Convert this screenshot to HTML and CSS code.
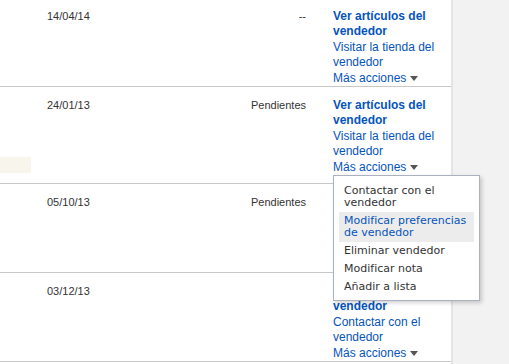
FILE: index.html
```html
<!DOCTYPE html>
<html lang="es">
<head>
<meta charset="utf-8">
<link rel="stylesheet" href="styles.css">
</head>
<body>
<div class="panel">
  <div class="row">
    <div class="note-col"></div>
    <div class="date">14/04/14</div>
    <div class="status">--</div>
    <div class="actions">
      <a class="link strong">Ver artículos del vendedor</a>
      <a class="link">Visitar la tienda del vendedor</a>
      <span class="more"><a class="link">Más acciones</a><span class="caret"></span></span>
    </div>
  </div>
  <div class="row">
    <div class="note-col"><div class="note"></div></div>
    <div class="date">24/01/13</div>
    <div class="status">Pendientes</div>
    <div class="actions">
      <a class="link strong">Ver artículos del vendedor</a>
      <a class="link">Visitar la tienda del vendedor</a>
      <span class="more"><a class="link">Más acciones</a><span class="caret"></span>
        <ul class="menu">
          <li>Contactar con el vendedor</li>
          <li class="active">Modificar preferencias de vendedor</li>
          <li>Eliminar vendedor</li>
          <li>Modificar nota</li>
          <li>Añadir a lista</li>
        </ul>
      </span>
    </div>
  </div>
  <div class="row">
    <div class="note-col"></div>
    <div class="date">05/10/13</div>
    <div class="status">Pendientes</div>
    <div class="actions">
      <a class="link strong">Ver artículos del vendedor</a>
      <a class="link">Visitar la tienda del vendedor</a>
      <span class="more"><a class="link">Más acciones</a><span class="caret"></span></span>
    </div>
  </div>
  <div class="row">
    <div class="note-col"></div>
    <div class="date">03/12/13</div>
    <div class="status"></div>
    <div class="actions">
      <a class="link strong">Ver artículos del vendedor</a>
      <a class="link">Contactar con el vendedor</a>
      <span class="more"><a class="link">Más acciones</a><span class="caret"></span></span>
    </div>
  </div>
</div>
</body>
</html>
```
FILE: styles.css
```css
html, body {
  margin: 0;
  padding: 0;
}
body {
  background: #f2f2f2;
  font-family: "Liberation Sans", Arial, sans-serif;
  overflow: hidden;
  height: 364px;
}
.panel {
  width: 451px;
  background: #fff;
  border-right: 2px solid #e4e4e4;
  margin-top: -2px;
  min-height: 380px;
}
.row {
  display: grid;
  grid-template-columns: 47px 150px 109px 145px;
  padding: 11px 0 0 0;
  border-bottom: 1px solid #c8c8c8;
}
.note-col {
  min-height: 1px;
}
.note {
  width: 31px;
  height: 16px;
  margin-top: 59px;
  margin-bottom: 10px;
  background: #f8f6ec;
}
.date, .status {
  font-size: 11px;
  line-height: 15.4px;
  color: #333;
}
.status {
  text-align: right;
}
.actions {
  padding-left: 27px;
  width: 110px;
  font-size: 12px;
  line-height: 15.4px;
}
.link {
  display: block;
  color: #0654ba;
  text-decoration: none;
}
.strong {
  font-weight: bold;
}
.more {
  display: block;
  position: relative;
}
.more .link {
  display: inline;
}
.caret {
  display: inline-block;
  width: 0;
  height: 0;
  border-left: 4px solid transparent;
  border-right: 4px solid transparent;
  border-top: 5px solid #555;
  margin-left: 4px;
  vertical-align: 1px;
}
.menu {
  position: absolute;
  top: 100%;
  left: 0;
  z-index: 5;
  width: 135px;
  margin: 0;
  padding: 6px 5px 4px 5px;
  list-style: none;
  background: #fff;
  border: 1px solid #aab2c2;
  box-shadow: 2px 2px 4px rgba(0, 0, 0, 0.18);
  font-family: "DejaVu Sans", Verdana, sans-serif;
  font-size: 11px;
  line-height: 12px;
  color: #333;
}
.menu li {
  padding: 3px 5px;
}
.menu li.active {
  background: #ececec;
  color: #0654ba;
}
```
